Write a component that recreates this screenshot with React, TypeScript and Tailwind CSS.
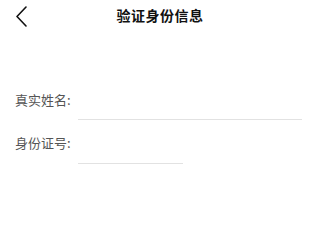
import React from 'react';

const FONT = { fontFamily: '"Noto Sans CJK SC", "Noto Sans", sans-serif' };

const Field: React.FC<{ label: string; width: string; height: string; className?: string }> = ({ label, width, height, className }) => (
    <div className={`flex items-start ${className ?? ''}`}>
        <span className="w-[63px] shrink-0 text-[13px] leading-[20px] text-[#555]">{label}</span>
        <div className={`${width} ${height} border-b border-[#e2e2e2]`}></div>
    </div>
);

const App: React.FC = () => {
    return (
        <div className="w-[320px] h-[202px] bg-white" style={FONT}>
            <header className="relative h-[30px] flex items-center justify-center">
                <button className="absolute left-[12px] top-[3px] p-[2px]">
                    <svg width="16" height="22" viewBox="0 0 16 22" fill="none">
                        <path d="M12 2 L3 11.5 L12 21" stroke="#111" strokeWidth="1.6" strokeLinecap="round" strokeLinejoin="round" />
                    </svg>
                </button>
                <h1 className="text-[14px] font-bold text-[#111] leading-[20px] tracking-[0.5px]">验证身份信息</h1>
            </header>

            <div className="pt-[60px] pl-[15px] pr-[18px]">
                <Field label="真实姓名:" width="flex-1" height="h-[30px]" />
                <Field label="身份证号:" width="w-[105px]" height="h-[31px]" className="mt-[13px]" />
            </div>
        </div>
    );
};

export default App;
